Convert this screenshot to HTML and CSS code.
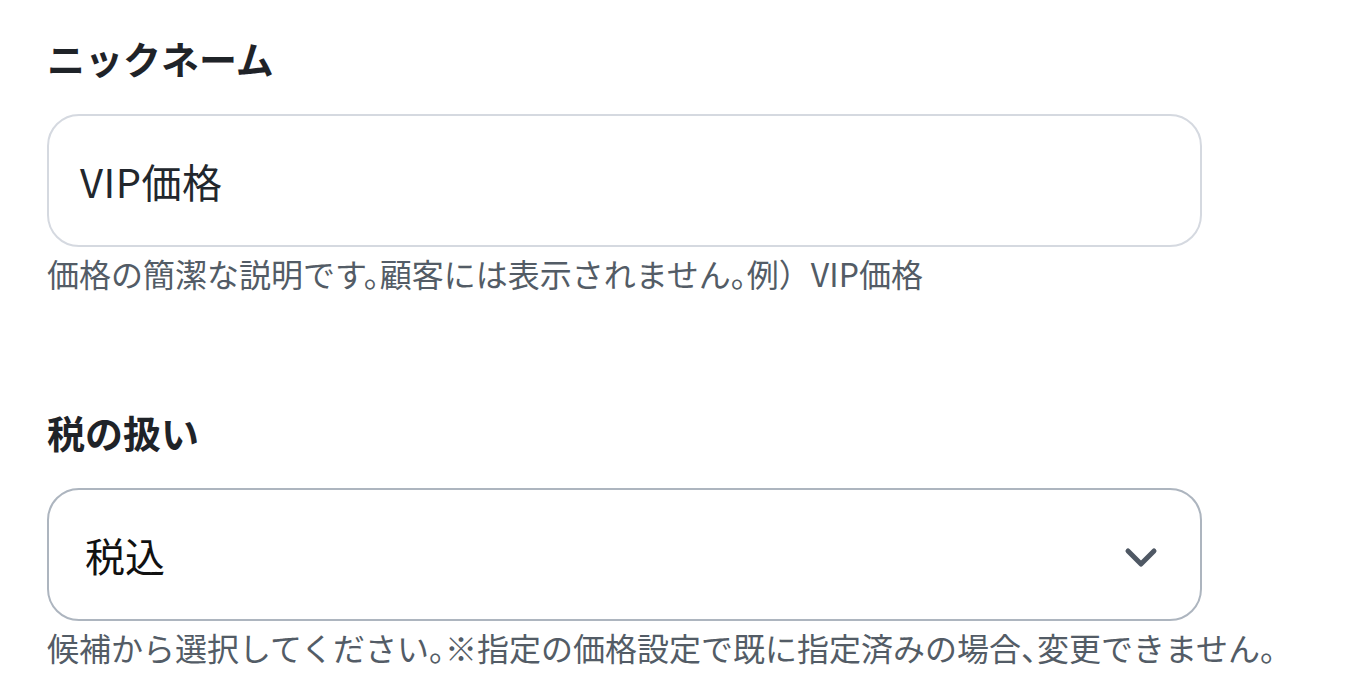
FILE: index.html
```html
<!DOCTYPE html>
<html lang="ja">
<head>
<meta charset="utf-8">
<link rel="stylesheet" href="styles.css">
</head>
<body>
<div class="form">
  <div class="field">
    <label class="label">ニックネーム</label>
    <div class="input">VIP価格</div>
    <p class="help">価格の簡潔な説明です。顧客には表示されません。例<span class="full">）</span>VIP価格</p>
  </div>
  <div class="field field-second">
    <label class="label">税の扱い</label>
    <div class="input select">
      <span class="select-value">税込</span>
      <svg class="chevron" width="34" height="22" viewBox="0 0 34 22"><path d="M4 4 L17 17 L30 4" fill="none" stroke="#4f5864" stroke-width="5" stroke-linecap="round" stroke-linejoin="round"/></svg>
    </div>
    <p class="help">候補から選択してください。※指定の価格設定で既に指定済みの場合、変更できません。</p>
  </div>
</div>
</body>
</html>
```

FILE: styles.css
```css
html, body {
  margin: 0;
  padding: 0;
  background: #ffffff;
}
body {
  font-family: "Noto Sans CJK JP", "Noto Sans", sans-serif;
  color: #1f2328;
}
.form {
  padding: 34px 0 0 47px;
  width: 1155px;
  display: flex;
  flex-direction: column;
}
.field {
  display: flex;
  flex-direction: column;
}
.field-second {
  margin-top: 115px;
}
.label {
  font-size: 38px;
  font-weight: 700;
  line-height: 48px;
  color: #1f2328;
}
.input {
  margin-top: 32px;
  box-sizing: border-box;
  height: 133px;
  border: 2px solid #d5d9e0;
  border-radius: 32px;
  display: flex;
  align-items: center;
  padding: 0 31px;
  font-size: 40px;
  letter-spacing: 0.5px;
  color: #22272d;
}
.select {
  border-color: #adb5bf;
  justify-content: space-between;
  padding: 0 42px 0 36px;
  color: #111;
  letter-spacing: 0;
}
.select-value {
  font-size: 40px;
}
.chevron {
  display: block;
  margin-top: 6px;
}
.help {
  margin: 6px 0 0 0;
  font-size: 32px;
  line-height: 40px;
  color: #535c66;
  white-space: nowrap;
  font-feature-settings: "halt";
}
.full {
  font-feature-settings: normal;
}
```
